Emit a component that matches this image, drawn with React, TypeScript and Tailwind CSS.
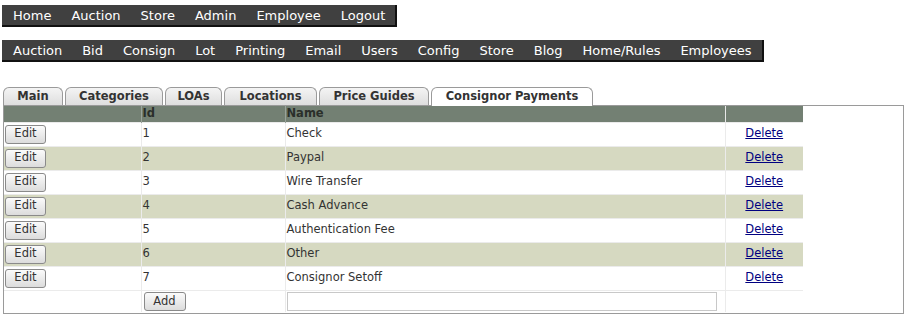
import React from "react";

const nav1 = ["Home", "Auction", "Store", "Admin", "Employee", "Logout"];
const nav2 = ["Auction", "Bid", "Consign", "Lot", "Printing", "Email", "Users", "Config", "Store", "Blog", "Home/Rules", "Employees"];
const tabs: { label: string; w: string; active?: boolean }[] = [
  { label: "Main", w: "w-[60px]" },
  { label: "Categories", w: "w-[98px]" },
  { label: "LOAs", w: "w-[57px]" },
  { label: "Locations", w: "w-[93px]" },
  { label: "Price Guides", w: "w-[110px]" },
  { label: "Consignor Payments", w: "w-[162px]", active: true },
];
const rows = ["Check", "Paypal", "Wire Transfer", "Cash Advance", "Authentication Fee", "Other", "Consignor Setoff"];

function NavBar({ items }: { items: string[] }) {
  return (
    <div className="flex w-fit h-[22px] items-center bg-[#404040] border-r-2 border-b-2 border-[#111] text-white text-[13px] leading-none">
      {items.map((it) => (
        <span key={it} className="px-[10px] first:pl-[11px]">{it}</span>
      ))}
    </div>
  );
}

function Btn({ label, w }: { label: string; w: string }) {
  return (
    <span className={`inline-flex ${w} h-[19px] items-center justify-center rounded-[3px] border border-[#8a8a8a] bg-gradient-to-b from-[#fbfbfb] to-[#dcdcdc] text-[11.5px] text-[#333] leading-none align-middle`}>
      {label}
    </span>
  );
}

export default function App() {
  return (
    <div className="bg-white w-[909px] h-[324px] pl-[2px] pt-[5px]" style={{ fontFamily: '"DejaVu Sans", Verdana, sans-serif' }}>
      <NavBar items={nav1} />
      <div className="mt-[13px]"><NavBar items={nav2} /></div>
      <div className="mt-[25px] ml-[1px] w-[901px]">
        <div className="flex items-end gap-[2px] h-[18px]">
          {tabs.map((t) => (
            <div
              key={t.label}
              className={`${t.w} ${t.active ? "h-[19px] bg-white relative top-[1px] z-10" : "h-[18px] bg-gradient-to-b from-[#f4f4f4] to-[#dedede]"} rounded-t-[6px] border border-b-0 border-[#9a9a9a] flex items-center justify-center text-[11.5px] font-bold text-[#333] leading-none`}
            >
              {t.label}
            </div>
          ))}
        </div>
        <div className="border border-[#9a9a9a] h-[209px]">
          <table className="border-collapse text-[11.5px] text-[#333] w-[799px]" style={{ tableLayout: "fixed" }}>
            <colgroup>
              <col className="w-[137px]" />
              <col className="w-[144px]" />
              <col className="w-[440px]" />
              <col className="w-[78px]" />
            </colgroup>
            <thead>
              <tr className="bg-[#738073] h-[16px]">
                <th className="border-r border-[#9aa39a] text-left font-bold text-[#2a2f2a] p-0 pl-[1px] leading-none"></th>
                <th className="border-r border-[#9aa39a] text-left font-bold text-[#2a2f2a] p-0 pl-[1px] leading-none">Id</th>
                <th className="border-r border-[#e8e8e8] text-left font-bold text-[#2a2f2a] p-0 pl-[1px] leading-none">Name</th>
                <th className="p-0"></th>
              </tr>
            </thead>
            <tbody>
              {rows.map((name, i) => (
                <tr key={name} className={`${i % 2 === 1 ? "bg-[#d6d9c1]" : "bg-white"} h-[24px] border-t border-[#ebebeb]`}>
                  <td className="border-r border-[#ebebeb] p-0 pl-[1px]"><Btn label="Edit" w="w-[41px]" /></td>
                  <td className="border-r border-[#ebebeb] p-0 pl-[1px]">{i + 1}</td>
                  <td className="border-r border-[#ebebeb] p-0 pl-[1px]">{name}</td>
                  <td className="p-0 text-center">
                    <a href="#" className="underline text-[#000080]">Delete</a>
                  </td>
                </tr>
              ))}
              <tr className="bg-white h-[22px] border-t border-[#ebebeb]">
                <td className="border-r border-[#ebebeb] p-0"></td>
                <td className="border-r border-[#ebebeb] p-0 pl-[2px]"><Btn label="Add" w="w-[42px]" /></td>
                <td className="border-r border-[#ebebeb] p-0 pl-[1px]">
                  <div className="w-[430px] h-[19px] border border-[#c8c8c8] bg-white"></div>
                </td>
                <td className="p-0"></td>
              </tr>
            </tbody>
          </table>
        </div>
      </div>
    </div>
  );
}
